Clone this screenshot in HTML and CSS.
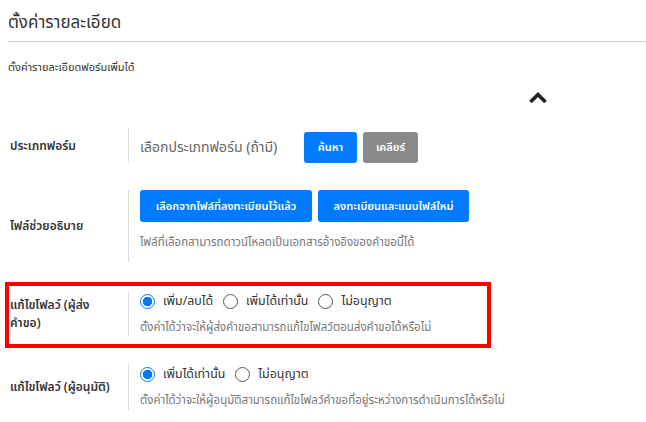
FILE: index.html
```html
<!DOCTYPE html>
<html lang="th">
<head>
  <meta charset="UTF-8">
  <title>ตั้งค่ารายละเอียด</title>
  <link rel="stylesheet" href="styles.css">
</head>
<body>
  <div class="page">
    <h1 class="title">ตั้งค่ารายละเอียด</h1>
    <p class="subtitle">ตั้งค่ารายละเอียดฟอร์มเพิ่มได้</p>

    <div class="toggle-row">
      <svg class="chevron" width="20" height="12" viewBox="0 0 20 12">
        <polyline points="2.5,10 10,2.5 17.5,10" fill="none" stroke="#222" stroke-width="3.6"/>
      </svg>
    </div>

    <div class="form-row row-type">
      <div class="form-label">ประเภทฟอร์ม</div>
      <div class="form-field">
        <div class="inline">
          <span class="select-text">เลือกประเภทฟอร์ม (ถ้ามี)</span>
          <button class="btn btn-primary btn-search">ค้นหา</button>
          <button class="btn btn-secondary btn-clear">เคลียร์</button>
        </div>
      </div>
    </div>

    <div class="form-row row-file">
      <div class="form-label">ไฟล์ช่วยอธิบาย</div>
      <div class="form-field">
        <div class="inline">
          <button class="btn btn-primary btn-wide">เลือกจากไฟล์ที่ลงทะเบียนไว้แล้ว</button>
          <button class="btn btn-primary btn-wide2">ลงทะเบียนและแนบไฟล์ใหม่</button>
        </div>
        <p class="help">ไฟล์ที่เลือกสามารถดาวน์โหลดเป็นเอกสารอ้างอิงของคำขอนี้ได้</p>
      </div>
    </div>

    <div class="highlight">
      <div class="form-row">
        <div class="form-label">แก้ไขโฟลว์ (ผู้ส่ง<br>คำขอ)</div>
        <div class="form-field">
          <div class="radios">
            <label class="radio"><input type="radio" name="sender" checked><span>เพิ่ม/ลบได้</span></label>
            <label class="radio"><input type="radio" name="sender"><span>เพิ่มได้เท่านั้น</span></label>
            <label class="radio"><input type="radio" name="sender"><span>ไม่อนุญาต</span></label>
          </div>
          <p class="help">ตั้งค่าได้ว่าจะให้ผู้ส่งคำขอสามารถแก้ไขโฟลว์ตอนส่งคำขอได้หรือไม่</p>
        </div>
      </div>
    </div>

    <div class="form-row row-approver">
      <div class="form-label">แก้ไขโฟลว์ (ผู้อนุมัติ)</div>
      <div class="form-field">
        <div class="radios">
          <label class="radio"><input type="radio" name="approver" checked><span>เพิ่มได้เท่านั้น</span></label>
          <label class="radio"><input type="radio" name="approver"><span>ไม่อนุญาต</span></label>
        </div>
        <p class="help">ตั้งค่าได้ว่าจะให้ผู้อนุมัติสามารถแก้ไขโฟลว์คำขอที่อยู่ระหว่างการดำเนินการได้หรือไม่</p>
      </div>
    </div>
  </div>
</body>
</html>
```

FILE: styles.css
```css
body {
  margin: 0;
  background: #fff;
  color: #333;
  font-family: Tahoma, "Noto Sans Thai", "Noto Sans", "DejaVu Sans", sans-serif;
  overflow: hidden;
}
.page { padding-left: 8px; }

.title {
  margin: 0;
  padding: 13px 0 8px;
  font-size: 17px;
  line-height: 20px;
  font-weight: normal;
  color: #333;
  border-bottom: 1px solid #ccc;
}
.subtitle {
  margin: 19px 0 0;
  font-size: 11px;
  line-height: 14px;
  color: #333;
}

.toggle-row {
  width: 540px;
  height: 20px;
  margin-top: 13px;
  display: flex;
  justify-content: flex-end;
  align-items: center;
}

.form-row {
  display: flex;
  align-items: center;
  padding-left: 2px;
}
.form-label {
  width: 118px;
  flex-shrink: 0;
  padding-right: 8px;
  box-sizing: border-box;
  font-size: 12px;
  line-height: 18px;
  font-weight: 600;
  color: #333;
}
.form-field {
  border-left: 1px solid #ddd;
  padding-left: 11px;
}
.inline {
  display: flex;
  align-items: center;
  gap: 6px;
}

.row-type { margin-top: 20px; }
.row-type .form-field { padding-top: 4px; }
.select-text {
  width: 158px;
  font-size: 14px;
  color: #666;
}

.btn {
  height: 31px;
  border: none;
  border-radius: 3px;
  color: #fff;
  font-family: inherit;
  font-size: 11px;
  font-weight: 600;
  padding: 0;
}
.btn-primary { background: #007bff; }
.btn-secondary { background: #8a8a8a; }
.btn-search { width: 53px; }
.btn-clear { width: 55px; }
.btn-wide { width: 172px; height: 32px; }
.btn-wide2 { width: 151px; height: 32px; }

.help {
  margin: 0;
  font-size: 11.5px;
  line-height: 14px;
  color: #777;
}

.row-file { margin-top: 27px; }
.row-file .help { margin-top: 14px; padding-bottom: 12px; }

.highlight {
  margin: 20px 0 0 -3px;
  width: 478px;
  border: 4px solid #ff0000;
  padding: 5px 0 8px;
}
.highlight .form-row { padding-left: 1px; }

.radios {
  display: flex;
  align-items: center;
  gap: 10px;
  height: 16px;
  padding-top: 2px;
}
.radio {
  display: flex;
  align-items: center;
  gap: 8px;
  font-size: 12.4px;
  color: #333;
}
.radio input {
  appearance: none;
  margin: 0;
  width: 15px;
  height: 15px;
  border: 1px solid #555;
  border-radius: 50%;
  box-sizing: border-box;
  background: #fff;
}
.radio input:checked {
  border-color: #007bff;
  background: radial-gradient(circle, #007bff 0 4.5px, #fff 5px);
}
.radios + .help { margin-top: 12px; padding-bottom: 1px; }

.row-approver { margin-top: 16px; }
.row-approver .help { padding-bottom: 2px; }
.row-approver .radios + .help { margin-top: 12px; }
```
